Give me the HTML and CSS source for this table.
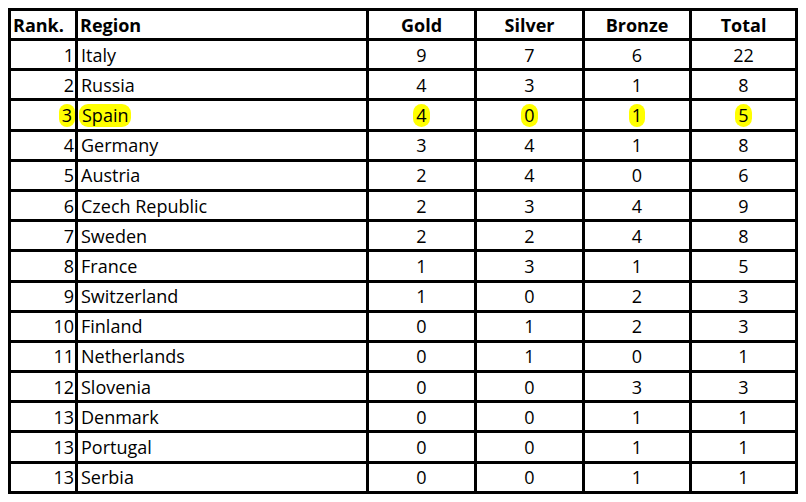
FILE: index.html
```html
<!DOCTYPE html>
<html>
<head>
<meta charset="utf-8">
<link rel="stylesheet" href="styles.css">
</head>
<body>
<table class="medals">
  <colgroup>
    <col class="c-rank"><col class="c-region"><col class="c-gold"><col class="c-silver"><col class="c-bronze"><col class="c-total">
  </colgroup>
  <thead>
    <tr><th class="rank-h">Rank.</th><th class="region-h">Region</th><th>Gold</th><th>Silver</th><th>Bronze</th><th>Total</th></tr>
  </thead>
  <tbody>
    <tr><td class="rank">1</td><td class="region">Italy</td><td>9</td><td>7</td><td>6</td><td>22</td></tr>
    <tr><td class="rank">2</td><td class="region">Russia</td><td>4</td><td>3</td><td>1</td><td>8</td></tr>
    <tr class="hl"><td class="rank"><span class="mark mark-end">3</span></td><td class="region"><span class="mark mark-start">Spain</span></td><td><span class="mark">4</span></td><td><span class="mark">0</span></td><td><span class="mark">1</span></td><td><span class="mark">5</span></td></tr>
    <tr><td class="rank">4</td><td class="region">Germany</td><td>3</td><td>4</td><td>1</td><td>8</td></tr>
    <tr><td class="rank">5</td><td class="region">Austria</td><td>2</td><td>4</td><td>0</td><td>6</td></tr>
    <tr><td class="rank">6</td><td class="region">Czech Republic</td><td>2</td><td>3</td><td>4</td><td>9</td></tr>
    <tr><td class="rank">7</td><td class="region">Sweden</td><td>2</td><td>2</td><td>4</td><td>8</td></tr>
    <tr><td class="rank">8</td><td class="region">France</td><td>1</td><td>3</td><td>1</td><td>5</td></tr>
    <tr><td class="rank">9</td><td class="region">Switzerland</td><td>1</td><td>0</td><td>2</td><td>3</td></tr>
    <tr><td class="rank">10</td><td class="region">Finland</td><td>0</td><td>1</td><td>2</td><td>3</td></tr>
    <tr><td class="rank">11</td><td class="region">Netherlands</td><td>0</td><td>1</td><td>0</td><td>1</td></tr>
    <tr><td class="rank">12</td><td class="region">Slovenia</td><td>0</td><td>0</td><td>3</td><td>3</td></tr>
    <tr><td class="rank">13</td><td class="region">Denmark</td><td>0</td><td>0</td><td>1</td><td>1</td></tr>
    <tr><td class="rank">13</td><td class="region">Portugal</td><td>0</td><td>0</td><td>1</td><td>1</td></tr>
    <tr><td class="rank">13</td><td class="region">Serbia</td><td>0</td><td>0</td><td>1</td><td>1</td></tr>
  </tbody>
</table>
</body>
</html>
```

FILE: styles.css
```css
html, body {
  margin: 0;
  padding: 0;
  background: #ffffff;
}

body {
  font-family: "Open Sans", "Liberation Sans", sans-serif;
  font-size: 18px;
  color: #000000;
}

.medals {
  margin: 8px 0 0 8px;
  width: 790px;
  table-layout: fixed;
  border-collapse: separate;
  border-spacing: 0;
  border-top: 3px solid #000;
  border-left: 3px solid #000;
}

.c-rank { width: 67px; }
.c-region { width: 291px; }
.c-gold { width: 108px; }
.c-silver { width: 108px; }
.c-bronze { width: 107px; }
.c-total { width: 106px; }

.medals th,
.medals td {
  border-right: 3px solid #000;
  border-bottom: 3px solid #000;
  padding: 0;
  height: 27.2px;
  line-height: 24px;
  text-align: center;
  vertical-align: middle;
  white-space: nowrap;
}

.medals thead th {
  height: 27px;
  font-weight: 700;
}

.medals th.rank-h {
  text-align: left;
  padding-left: 2px;
}

.medals th.region-h {
  text-align: left;
  padding-left: 2px;
}

.medals td.rank {
  text-align: right;
  padding-right: 1px;
}

.medals td.region {
  text-align: left;
  padding-left: 3px;
}

.mark {
  background: #ffff00;
  border-radius: 9px;
  padding: 0 3px;
  display: inline-block;
  line-height: 23px;
}

.mark-end {
  margin-right: -1px;
}

.mark-start {
  margin-left: -2px;
}
```
